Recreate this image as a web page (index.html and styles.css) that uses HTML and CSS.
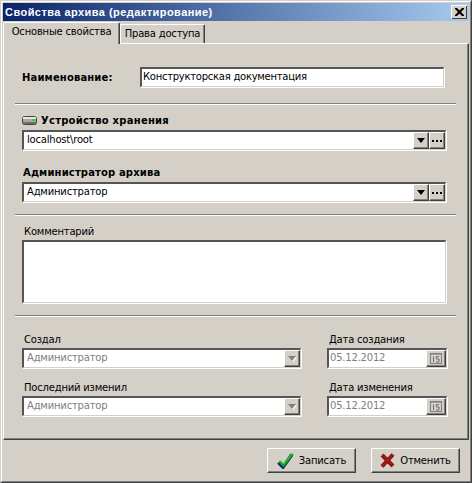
FILE: index.html
```html
<!DOCTYPE html>
<html lang="ru">
<head>
<meta charset="utf-8">
<title>Свойства архива</title>
<link rel="stylesheet" href="styles.css">
</head>
<body>
<div class="window"><div class="window-inner">
  <div class="titlebar">
    <span class="title">Свойства архива (редактирование)</span>
    <span class="close"><svg width="9" height="8" viewBox="0 0 9 8"><path d="M0 0h2l2.500 2.500L7 0h2v1L6 4l3 3v1H7L4.500 5.500 2 8H0V7l3-3-3-3z" fill="#000"/></svg></span>
  </div>
  <div class="tabs">
    <div class="tab active">Основные свойства</div>
    <div class="tab">Права доступа</div>
  </div>
  <div class="panel">
    <div class="name-row">
      <div class="bold name-label">Наименование:</div>
      <div class="sunken name-input">Конструкторская документация</div>
    </div>
    <div class="sep sep-name"></div>
    <div class="section storage">
      <div class="label bold icon-label wide-bold">
        <svg class="drive" width="15" height="9" viewBox="0 0 15 9"><rect x="0.500" y="0.500" width="14" height="8" rx="2" fill="#a8a8a0" stroke="#404040"/><rect x="1" y="1" width="13" height="2" fill="#e8e8e0"/><rect x="1" y="6" width="13" height="2" fill="#70706c"/><rect x="10" y="3" width="3" height="2" fill="#30d030"/></svg>
        Устройство хранения
      </div>
      <div class="sunken combo"><span class="value">localhost\root</span><span class="btn arrow"><i class="tri"></i></span><span class="btn dots"><svg width="10" height="2" viewBox="0 0 10 2"><path d="M0 0h2v2H0zM4 0h2v2H4zM8 0h2v2H8z" fill="#000"/></svg></span></div>
      <div class="label bold label-next">Администратор архива</div>
      <div class="sunken combo"><span class="value">Администратор</span><span class="btn arrow"><i class="tri"></i></span><span class="btn dots"><svg width="10" height="2" viewBox="0 0 10 2"><path d="M0 0h2v2H0zM4 0h2v2H4zM8 0h2v2H8z" fill="#000"/></svg></span></div>
    </div>
    <div class="sep sep-mid"></div>
    <div class="section comment">
      <div class="label">Комментарий</div>
      <div class="sunken memo"></div>
    </div>
    <div class="sep sep-mid"></div>
    <div class="section info">
      <div class="label">Создал</div>
      <div class="label">Дата создания</div>
      <div class="sunken combo disabled"><span class="value">Администратор</span><span class="btn arrow"><i class="tri"></i></span></div>
      <div class="sunken combo disabled date"><span class="value">05.12.2012</span><span class="btn cal"><svg width="12" height="11" viewBox="0 0 12 11"><rect x="0.500" y="0.500" width="11" height="10" fill="none" stroke="#808080"/><path d="M1 1h10v1H1z" fill="#a0a0a0"/><path d="M3.500 3.500v5.500M9 3.500H6.500v2.500H9V9H6" fill="none" stroke="#707070"/></svg></span></div>
      <div class="label">Последний изменил</div>
      <div class="label">Дата изменения</div>
      <div class="sunken combo disabled"><span class="value">Администратор</span><span class="btn arrow"><i class="tri"></i></span></div>
      <div class="sunken combo disabled date"><span class="value">05.12.2012</span><span class="btn cal"><svg width="12" height="11" viewBox="0 0 12 11"><rect x="0.500" y="0.500" width="11" height="10" fill="none" stroke="#808080"/><path d="M1 1h10v1H1z" fill="#a0a0a0"/><path d="M3.500 3.500v5.500M9 3.500H6.500v2.500H9V9H6" fill="none" stroke="#707070"/></svg></span></div>
    </div>
  </div>
  <div class="footer">
    <div class="action"><svg width="17" height="16" viewBox="0 0 17 16"><path d="M1.500 9.500 6 14 15 1.500" fill="none" stroke="#0a1a7a" stroke-width="3.500"/><path d="M2.500 8.500 6.500 12.500 15.500 1" fill="none" stroke="#0fa50f" stroke-width="2.500"/><path d="M3.500 8 6.500 11 15 0.500" fill="none" stroke="#55dd55" stroke-width="0.800"/></svg>Записать</div>
    <div class="action"><svg width="15" height="15" viewBox="0 0 15 15"><path d="M2 2 13 13M13 1.500 2 13.500" fill="none" stroke="#8c1010" stroke-width="4"/><path d="M2.500 2 13 12.500M12.500 2 2.500 13" fill="none" stroke="#c02828" stroke-width="1"/></svg>Отменить</div>
  </div>
</div></div>
</body>
</html>
```
FILE: styles.css
```css
* { box-sizing: border-box; }
html, body { margin: 0; padding: 0; }
body {
  width: 472px;
  height: 483px;
  overflow: hidden;
  font-family: "DejaVu Sans", sans-serif;
  font-size: 10px;
  letter-spacing: -0.2px;
  color: #000;
  background: #d4d0c8;
}
.window {
  width: 472px;
  height: 483px;
  border: 1px solid;
  border-color: #d4d0c8 #404040 #404040 #d4d0c8;
}
.window-inner {
  height: 100%;
  border: 1px solid;
  border-color: #fff #808080 #808080 #fff;
  padding: 1px;
  display: flex;
  flex-direction: column;
}
.titlebar {
  height: 18px;
  flex: none;
  display: flex;
  align-items: center;
  justify-content: space-between;
  padding: 0 2px;
  background: linear-gradient(90deg, #0a246a, #a6caf0);
}
.title {
  color: #fff;
  font-weight: bold;
  font-size: 11px;
  font-family: "Liberation Sans", sans-serif;
  letter-spacing: 0.45px;
}
.close {
  width: 16px;
  height: 14px;
  display: flex;
  align-items: center;
  justify-content: center;
  background: #d4d0c8;
  box-shadow: inset 1px 1px 0 #fff, inset -1px -1px 0 #404040;
}
.tabs {
  height: 21px;
  flex: none;
  margin-top: 1px;
  display: flex;
  align-items: flex-end;
  position: relative;
  z-index: 1;
}
.tab {
  height: 19px;
  width: 85px;
  padding-top: 3px;
  text-align: center;
  background: #d4d0c8;
  border: 1px solid;
  border-color: #fff #404040 #d4d0c8 #fff;
  border-bottom: 0;
  border-radius: 2px 2px 0 0;
  white-space: nowrap;
  box-shadow: inset -1px 0 0 #808080;
}
.tab.active {
  height: 22px;
  width: 117px;
  margin-bottom: -1px;
  padding-top: 3px;
}
.panel {
  flex: none;
  height: 397px;
  border: 1px solid;
  border-color: #fff #404040 #404040 #fff;
  box-shadow: inset -1px -1px 0 #808080;
  padding: 0 11px;
}
.bold { font-weight: bold; letter-spacing: 0; }
.wide-bold { letter-spacing: 0.25px; }
.name-row {
  display: flex;
  padding: 23px 0 0 7px;
  align-items: center;
}
.name-label { width: 118px; letter-spacing: 0.15px; }
.sunken {
  background: #fff;
  border-style: solid;
  border-width: 2px 1px 1px 2px;
  border-color: #555 #d4d0c8 #d4d0c8 #555;
  box-shadow: 1px 1px 0 #fff;
}
.name-input {
  width: 304px;
  height: 20px;
  padding-left: 1px;
  line-height: 16px;
  letter-spacing: -0.26px;
}
.sep {
  height: 2px;
  width: 441px;
  border-top: 1px solid #808080;
  border-bottom: 1px solid #fff;
}
.sep-name { margin-top: 16px; }
.sep-mid { margin-top: 12px; }
.section { padding-left: 7px; }
.label {
  height: 15px;
  line-height: 15px;
  margin-bottom: 1px;
  padding-left: 2px;
  white-space: nowrap;
}
.storage { padding-top: 8px; }
.storage .label { margin-bottom: 2px; }
.icon-label {
  display: flex;
  align-items: center;
  gap: 4px;
  padding-left: 0;
}
.label-next { margin-top: 15px; padding-left: 1px; letter-spacing: 0.15px; }
.combo {
  height: 20px;
  width: 424px;
  display: flex;
  align-items: stretch;
}
.value {
  flex: 1;
  padding-left: 3px;
  line-height: 16px;
  white-space: nowrap;
  overflow: hidden;
}
.btn {
  width: 16px;
  flex: none;
  display: flex;
  align-items: center;
  justify-content: center;
  background: #d4d0c8;
  border: 1px solid;
  border-color: #fff #404040 #404040 #fff;
  box-shadow: inset -1px -1px 0 #808080;
}
.tri {
  width: 0;
  height: 0;
  border-left: 4px solid transparent;
  border-right: 4px solid transparent;
  border-top: 5px solid #000;
}
.comment { padding-top: 8px; }
.memo {
  width: 424px;
  height: 63px;
}
.info {
  padding-top: 15px;
  display: grid;
  grid-template-columns: 279px 120px;
  column-gap: 26px;
}
.info .combo { width: auto; margin-bottom: 12px; }
.disabled .value { color: #808080; }
.disabled .tri { border-top-color: #808080; filter: drop-shadow(1px 1px 0 #fff); }
.date .value { padding-left: 1px; }
.cal {
  width: 20px;
}
.footer {
  flex: 1;
  display: flex;
  justify-content: flex-end;
  gap: 15px;
  padding: 8px 9px 0 0;
}
.action {
  width: 89px;
  height: 25px;
  display: flex;
  align-items: center;
  justify-content: center;
  gap: 5px;
  background: #d4d0c8;
  border: 1px solid;
  border-color: #fff #404040 #404040 #fff;
  box-shadow: inset -1px -1px 0 #808080;
}
```
